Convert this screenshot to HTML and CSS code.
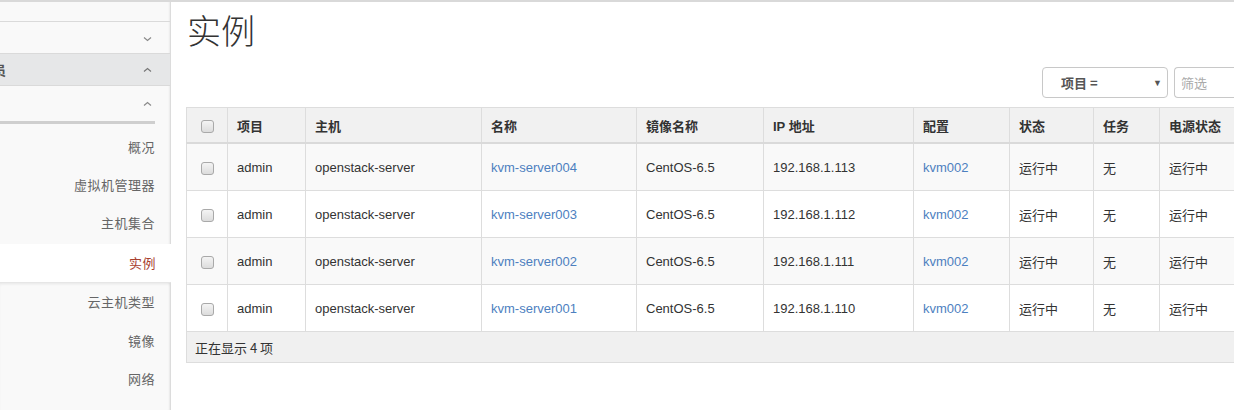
FILE: index.html
```html
<!DOCTYPE html>
<html lang="zh-CN">
<head>
<meta charset="utf-8">
<title>实例</title>
<link rel="stylesheet" href="styles.css">
</head>
<body>
<div class="topline"></div>
<div class="layout">
  <aside class="sidebar">
    <div class="panel panel-top">
      <div class="side-row row-thin"></div>
      <div class="side-row row-acc">
        <svg class="chev" width="9" height="6" viewBox="0 0 9 6"><path d="M1 1.5 L4.5 4.5 L8 1.5" fill="none" stroke="#8a8a8a" stroke-width="1.2"/></svg>
      </div>
      <div class="side-row row-dash"><span class="dash-title">员</span>
        <svg class="chev" width="9" height="6" viewBox="0 0 9 6"><path d="M1 4.5 L4.5 1.5 L8 4.5" fill="none" stroke="#777" stroke-width="1.2"/></svg>
      </div>
      <div class="side-row row-group">
        <svg class="chev" width="9" height="6" viewBox="0 0 9 6"><path d="M1 4.5 L4.5 1.5 L8 4.5" fill="none" stroke="#8a8a8a" stroke-width="1.2"/></svg>
      </div>
      <div class="group-bar"></div>
      <nav class="nav">
        <a class="nav-item">概况</a>
        <a class="nav-item">虚拟机管理器</a>
        <a class="nav-item">主机集合</a>
      </nav>
    </div>
    <a class="nav-item active">实例</a>
    <div class="panel panel-bottom">
      <a class="nav-item">云主机类型</a>
      <a class="nav-item">镜像</a>
      <a class="nav-item">网络</a>
    </div>
  </aside>
  <main class="main">
    <h1 class="page-title">实例</h1>
    <div class="toolbar">
      <div class="select">
        <span class="select-label">项目 =</span>
        <span class="caret">▼</span>
      </div>
      <div class="filter-input">筛选</div>
    </div>
    <table class="table">
      <colgroup>
        <col class="c-check"><col class="c-proj"><col class="c-host"><col class="c-name"><col class="c-img"><col class="c-ip"><col class="c-flavor"><col class="c-status"><col class="c-task"><col class="c-power">
      </colgroup>
      <thead>
        <tr>
          <th class="chk"><span class="checkbox"></span></th>
          <th>项目</th><th>主机</th><th>名称</th><th>镜像名称</th><th>IP 地址</th><th>配置</th><th>状态</th><th>任务</th><th>电源状态</th>
        </tr>
      </thead>
      <tbody>
        <tr class="odd">
          <td class="chk"><span class="checkbox"></span></td>
          <td>admin</td><td>openstack-server</td><td><a class="link">kvm-server004</a></td><td>CentOS-6.5</td><td>192.168.1.113</td><td><a class="link">kvm002</a></td><td>运行中</td><td>无</td><td>运行中</td>
        </tr>
        <tr>
          <td class="chk"><span class="checkbox"></span></td>
          <td>admin</td><td>openstack-server</td><td><a class="link">kvm-server003</a></td><td>CentOS-6.5</td><td>192.168.1.112</td><td><a class="link">kvm002</a></td><td>运行中</td><td>无</td><td>运行中</td>
        </tr>
        <tr class="odd">
          <td class="chk"><span class="checkbox"></span></td>
          <td>admin</td><td>openstack-server</td><td><a class="link">kvm-server002</a></td><td>CentOS-6.5</td><td>192.168.1.111</td><td><a class="link">kvm002</a></td><td>运行中</td><td>无</td><td>运行中</td>
        </tr>
        <tr>
          <td class="chk"><span class="checkbox"></span></td>
          <td>admin</td><td>openstack-server</td><td><a class="link">kvm-server001</a></td><td>CentOS-6.5</td><td>192.168.1.110</td><td><a class="link">kvm002</a></td><td>运行中</td><td>无</td><td>运行中</td>
        </tr>
      </tbody>
      <tfoot>
        <tr><td colspan="10" class="footer-cell">正在显示 4 项</td></tr>
      </tfoot>
    </table>
  </main>
</div>
</body>
</html>
```
FILE: styles.css
```css
html, body {
  margin: 0;
  padding: 0;
  background: #fff;
  overflow: hidden;
}
body {
  width: 1234px;
  height: 410px;
  font-family: "Liberation Sans", Arial, "Noto Sans CJK SC", sans-serif;
  font-size: 13px;
  color: #333;
}
.topline {
  height: 2px;
  background: #d9d9d9;
}
.layout {
  display: flex;
  height: 408px;
}
.sidebar {
  width: 171px;
  flex: 0 0 171px;
  display: flex;
  flex-direction: column;
}
.panel {
  background: #f9f9f9;
  border-right: 1px solid #dcdcdc;
  box-shadow: inset -2px 0 2px -1px rgba(0,0,0,0.06);
}
.panel-top {
  height: 242px;
  flex: 0 0 242px;
}
.panel-bottom {
  flex: 1;
  border-top: 1px solid #e6e6e6;
  box-shadow: inset -2px 0 2px -1px rgba(0,0,0,0.06), inset 0 2px 3px -1px rgba(0,0,0,0.08);
}
.side-row {
  display: flex;
  align-items: center;
  justify-content: flex-end;
  padding-right: 18px;
  border-bottom: 1px solid #dadada;
  box-sizing: border-box;
}
.row-thin { height: 20px; }
.row-acc { height: 32px; }
.row-acc .chev { margin-top: 2px; }
.row-dash {
  height: 32px;
  background: #e6e7e8;
  justify-content: space-between;
}
.dash-title {
  margin-left: -7px;
  font-family: "Noto Sans CJK SC", sans-serif;
  font-weight: bold;
  color: #555;
  font-size: 13px;
}
.row-group {
  height: 35px;
  border-bottom: none;
}
.group-bar {
  height: 3px;
  width: 155px;
  background: #cfcfcf;
  margin-bottom: 4px;
}
.chev { display: block; }
.nav { display: flex; flex-direction: column; }
.nav-item {
  display: block;
  height: 38.5px;
  line-height: 38.5px;
  text-align: right;
  padding-right: 15px;
  font-family: "Noto Sans CJK SC", sans-serif;
  font-size: 13px;
  color: #666;
  letter-spacing: 0.5px;
}
.nav .nav-item {
  height: 38px;
  line-height: 38px;
}
.nav-item.active {
  color: #a8402f;
  background: #fff;
  flex: 0 0 38px;
  height: 38px;
  line-height: 38px;
  width: 171px;
  box-sizing: border-box;
}
.main {
  flex: 1;
  padding-left: 15px;
  min-width: 0;
}
.page-title {
  margin: 8px 0 0 1px;
  font-family: "Noto Sans CJK SC", sans-serif;
  font-weight: 300;
  font-size: 34px;
  line-height: 40px;
  color: #333;
}
.toolbar {
  display: flex;
  justify-content: flex-end;
  gap: 6px;
  margin-top: 17px;
  margin-right: -10px;
  height: 32px;
}
.select {
  width: 126px;
  height: 31px;
  box-sizing: border-box;
  border: 1px solid #c8c8c8;
  border-radius: 4px;
  display: flex;
  align-items: center;
  justify-content: space-between;
  padding: 0 5px 0 18px;
}
.select-label {
  font-family: "Noto Sans CJK SC", sans-serif;
  font-weight: bold;
  color: #555;
  font-size: 13px;
}
.caret {
  font-size: 9px;
  color: #555;
}
.filter-input {
  width: 70px;
  height: 31px;
  box-sizing: border-box;
  border: 1px solid #c8c8c8;
  border-right: none;
  border-radius: 4px 0 0 4px;
  padding-left: 6px;
  line-height: 29px;
  font-family: "Noto Sans CJK SC", sans-serif;
  color: #aaa;
  font-size: 13px;
}
.table {
  margin-top: 8px;
  border-collapse: collapse;
  table-layout: fixed;
  width: 1120px;
  border: 1px solid #ddd;
}
.c-check { width: 41px; }
.c-proj { width: 78px; }
.c-host { width: 176px; }
.c-name { width: 155px; }
.c-img { width: 127px; }
.c-ip { width: 150px; }
.c-flavor { width: 96px; }
.c-status { width: 84px; }
.c-task { width: 66px; }
.c-power { width: 147px; }
.table th, .table td {
  border: 1px solid #ddd;
  padding: 0 9px;
  text-align: left;
  vertical-align: middle;
  font-family: "Liberation Sans", Arial, "Noto Sans CJK SC", sans-serif;
  white-space: nowrap;
  overflow: hidden;
}
.table thead th {
  height: 34px;
  background: #f1f1f1;
  font-weight: bold;
  border-bottom: 2px solid #dadada;
  color: #333;
}
.table tbody td {
  height: 46px;
  background: #fff;
}
.table tbody tr.odd td {
  background: #f9f9f9;
}
.table .chk {
  text-align: center;
  padding: 0;
}
.checkbox {
  display: inline-block;
  width: 11px;
  height: 11px;
  border: 1px solid #a9a9a9;
  border-radius: 3px;
  background: linear-gradient(#f4f4f4, #dcdcdc);
  vertical-align: middle;
}
.link {
  color: #4d7fbf;
  text-decoration: none;
}
.table tfoot td.footer-cell {
  height: 30px;
  background: #f0f0f0;
  padding-left: 8px;
  font-family: "Noto Sans CJK SC", sans-serif;
}
```
